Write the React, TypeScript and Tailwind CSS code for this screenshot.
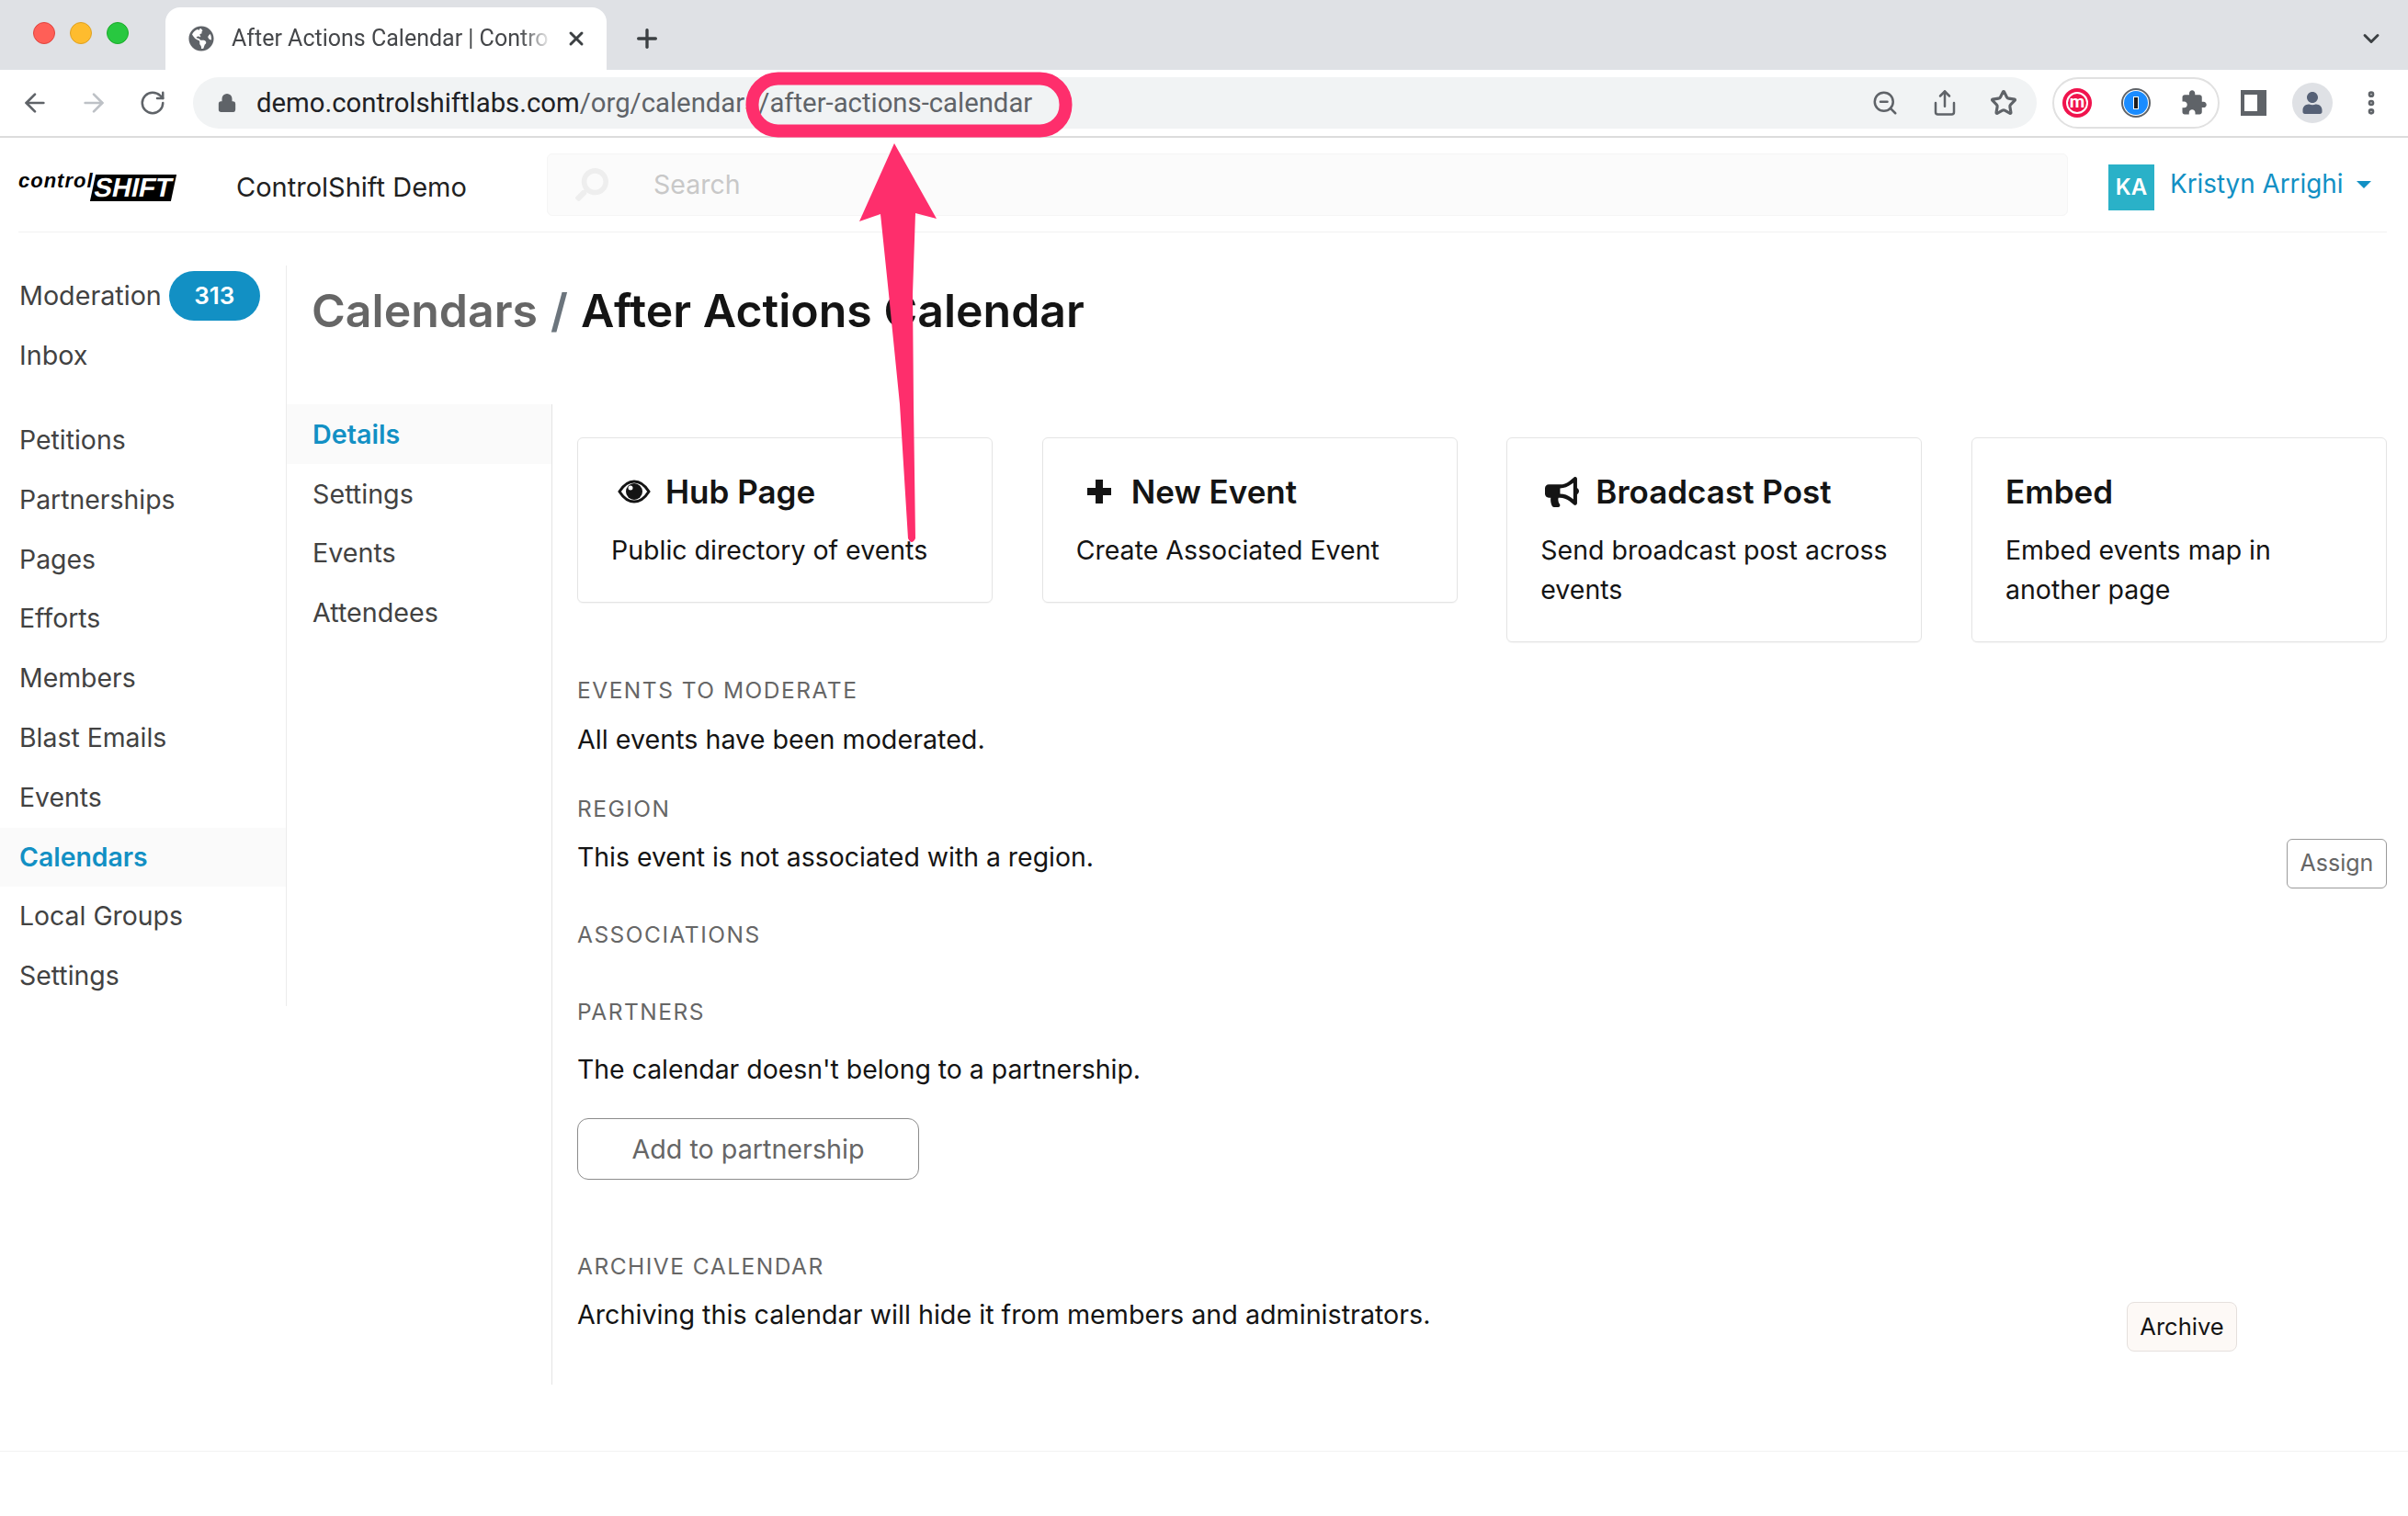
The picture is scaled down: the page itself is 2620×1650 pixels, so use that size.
import React from 'react';
import { ArrowLeft, ArrowRight, RotateCw, Lock, ZoomOut, Share, Star, X, Plus, ChevronDown, MoreVertical } from 'lucide-react';
import { FaBullhorn, FaUser, FaSearch, FaGlobeAmericas } from 'react-icons/fa';

const mainNav = ['Petitions', 'Partnerships', 'Pages', 'Efforts', 'Members', 'Blast Emails', 'Events', 'Calendars', 'Local Groups', 'Settings'];
const subNav = ['Details', 'Settings', 'Events', 'Attendees'];

function BrowserChrome() {
    return (
        <div className="font-['Roboto',sans-serif]">
            <div className="flex h-[76px] items-end bg-[#dfe1e5] pl-[36px] pr-[26px]">
                <div className="mb-[28px] flex gap-[16px] self-end">
                    <span className="h-[24px] w-[24px] rounded-full border border-[#e0443e] bg-[#ff5f57]" />
                    <span className="h-[24px] w-[24px] rounded-full border border-[#dea123] bg-[#febc2e]" />
                    <span className="h-[24px] w-[24px] rounded-full border border-[#1aab29] bg-[#28c840]" />
                </div>
                <div className="ml-[40px] flex h-[68px] w-[480px] items-center rounded-t-[16px] bg-white pl-[25px]">
                    <FaGlobeAmericas className="h-[28px] w-[28px] shrink-0 text-[#5f6368]" />
                    <span className="ml-[19px] w-[349px] whitespace-nowrap text-[25px] text-[#45474a] [mask-image:linear-gradient(to_right,black_90%,transparent)]">After Actions Calendar | Contro</span>
                    <X className="ml-[14px] h-[24px] w-[24px] text-[#3c4043]" strokeWidth={3} />
                </div>
                <Plus className="mb-[18px] ml-[28px] h-[32px] w-[32px] text-[#3c4043]" strokeWidth={2.5} />
                <ChevronDown className="mb-[20px] ml-auto h-[28px] w-[28px] text-[#3c4043]" strokeWidth={2.5} />
            </div>
            <div className="flex h-[74px] items-center border-b-2 border-[#dcdcdc] bg-white pl-[22px]">
                <ArrowLeft className="h-[32px] w-[32px] text-[#5f6368]" />
                <ArrowRight className="ml-[32px] h-[32px] w-[32px] text-[#bdc1c6]" />
                <RotateCw className="ml-[33px] h-[30px] w-[30px] text-[#5f6368]" />
                <div className="ml-[29px] flex h-[56px] w-[2006px] shrink-0 items-center rounded-full bg-[#f1f3f4] pl-[26px] pr-[21px]">
                    <Lock className="h-[22px] w-[22px] fill-[#5f6368] text-[#5f6368]" />
                    <span className="mt-[2px] ml-[21px] whitespace-nowrap text-[29.3px] text-[#202124]">
                        demo.controlshiftlabs.com<span className="text-[#5f6368]">/org/calendars/after-actions-calendar</span>
                    </span>
                    <ZoomOut className="ml-auto h-[30px] w-[30px] text-[#5f6368]" />
                    <Share className="ml-[35px] h-[30px] w-[30px] text-[#5f6368]" />
                    <Star className="ml-[34px] h-[30px] w-[30px] text-[#5f6368]" strokeWidth={2.5} />
                </div>
                <div className="ml-[17px] flex h-[56px] w-[182px] shrink-0 items-center justify-between rounded-full border-2 border-[#e1e1e1] pl-[9px] pr-[11px]">
                    <span className="flex h-[32px] w-[32px] items-center justify-center rounded-full bg-[#f0134d] p-[4px]">
                        <span className="flex h-full w-full items-center justify-center rounded-full border-2 border-white pb-[3px] text-[19px] leading-none font-bold text-white">m</span>
                    </span>
                    <span className="flex h-[32px] w-[32px] items-center justify-center rounded-full border-2 border-[#5f6368] bg-white p-[1px]">
                        <span className="flex h-full w-full items-center justify-center rounded-full bg-[#1a8cff]">
                            <span className="h-[14px] w-[6px] border border-white bg-[#1c1c1c]" />
                        </span>
                    </span>
                    <svg className="h-[30px] w-[30px] text-[#5f6368]" viewBox="0 0 24 24" fill="currentColor">
                        <path d="M20.5 11H19V7c0-1.1-.9-2-2-2h-4V3.5C13 2.12 11.88 1 10.5 1S8 2.12 8 3.5V5H4c-1.1 0-1.99.9-1.99 2v3.8H3.5c1.49 0 2.7 1.21 2.7 2.7s-1.21 2.7-2.7 2.7H2V20c0 1.1.9 2 2 2h3.8v-1.5c0-1.49 1.21-2.7 2.7-2.7 1.49 0 2.7 1.21 2.7 2.7V22H17c1.1 0 2-.9 2-2v-4h1.5c1.38 0 2.5-1.12 2.5-2.5S21.88 11 20.5 11z" />
                    </svg>
                </div>
                <div className="ml-[23px] h-[28px] w-[28px] shrink-0 border-y-[5px] border-r-[10px] border-l-[4px] border-[#5f6368] bg-white" />
                <div className="ml-[28px] flex h-[44px] w-[44px] shrink-0 items-center justify-center rounded-full bg-[#dfe1e5]">
                    <FaUser className="h-[24px] w-[24px] text-[#566176]" />
                </div>
                <MoreVertical className="ml-[26px] h-[32px] w-[32px] shrink-0 text-[#5f6368]" strokeWidth={3} />
            </div>
        </div>
    );
}

function Logo() {
    return (
        <div className="flex w-[170px] items-start font-['Liberation_Sans',sans-serif]">
            <span className="mt-[1px] w-[81px] shrink-0 text-[22px] leading-[24px] font-bold tracking-[1px] text-black italic">control</span>
            <span className="mt-[6px] flex h-[29px] w-[88px] shrink-0 -skew-x-12 items-center justify-center bg-black text-[29px] leading-[29px] font-bold text-white">SHIFT</span>
        </div>
    );
}

function TopBar() {
    return (
        <div className="mr-[23px] ml-[20px] flex h-[103px] items-center border-b border-[#f2f2f2]">
            <Logo />
            <span className="mt-[6px] ml-[67px] w-[338px] shrink-0 whitespace-nowrap text-[29px] text-[#212121]">ControlShift Demo</span>
            <div className="flex h-[68px] w-[1655px] shrink-0 items-center rounded-[6px] border border-[#f5f5f5] bg-[#fbfbfb] pl-[30px]">
                <FaSearch className="h-[36px] w-[36px] -scale-x-100 text-[#eeeeee]" />
                <span className="mt-[1px] ml-[49px] text-[28.5px] text-[#c8c8c8]">Search</span>
            </div>
            <div className="mt-[6px] ml-[44px] flex h-[50px] w-[50px] shrink-0 items-center justify-center bg-[#2ab1c8] text-[24px] font-semibold text-white">KA</div>
            <span className="ml-[17px] shrink-0 whitespace-nowrap text-[27.8px] text-[#1290c4]">Kristyn Arrighi</span>
            <span className="ml-[15px] h-0 w-0 border-x-[8px] border-t-[8px] border-x-transparent border-t-[#1290c4]" />
        </div>
    );
}

function Sidebar() {
    return (
        <div className="mt-[36px] h-[806px] w-[312px] shrink-0 self-start border-r border-[#ececec]">
            <div className="flex h-[65px] items-center pl-[21px] text-[#424242]">
                Moderation
                <span className="ml-[8px] flex h-[54px] w-[99px] items-center justify-center rounded-full bg-[#1290c4] text-[26px] font-semibold text-white">313</span>
            </div>
            <div className="flex h-[65px] items-center pl-[21px] text-[#424242]">Inbox</div>
            <div className="mt-[28px] flex flex-col text-[28.4px]">
                {mainNav.map((item) => (
                    <div
                        key={item}
                        className={item === 'Calendars' ? 'flex h-[64.8px] items-center bg-[#fafafa] pl-[21px] font-semibold text-[#1290c4]' : 'flex h-[64.8px] items-center pl-[21px] text-[#424242]'}
                    >
                        {item}
                    </div>
                ))}
            </div>
        </div>
    );
}

function EyeIcon() {
    return (
        <svg className="mr-[16px] ml-[7px] h-[36px] w-[36px] text-[#141414]" viewBox="0 0 36 36" fill="none">
            <path d="M2 18C7 10 12 7 18 7s11 3 16 11c-5 8-10 11-16 11S7 26 2 18z" stroke="currentColor" strokeWidth="3" />
            <circle cx="18" cy="18" r="9" fill="currentColor" />
            <circle cx="14" cy="14" r="2.5" fill="white" />
        </svg>
    );
}

function PlusIcon() {
    return (
        <svg className="mr-[21px] ml-[11px] h-[28px] w-[28px] text-[#141414]" viewBox="0 0 28 28" fill="currentColor">
            <path d="M10 1h8v9h9v8h-9v9h-8v-9H1v-8h9z" />
        </svg>
    );
}

function ActionCard({ icon, title, children }: { icon?: React.ReactNode; title: string; children: React.ReactNode }) {
    return (
        <div className="w-[452px] self-start rounded-[6px] border border-[#e4e4e4] px-[36px] pt-[30px] pb-[35px] shadow-[0_1px_1px_rgba(0,0,0,0.04)]">
            <div className="flex h-[56px] items-center text-[35px] font-semibold text-[#141414]">
                {icon}
                {title}
            </div>
            <div className="mt-[14px] text-[28.5px] leading-[43px] text-[#141414]">{children}</div>
        </div>
    );
}

function SectionLabel({ children, className }: { children: React.ReactNode; className: string }) {
    return <div className={`text-[24.5px] uppercase tracking-[1.5px] text-[#666666] ${className}`}>{children}</div>;
}

export default function App() {
    return (
        <div className="relative min-h-[1650px] bg-white font-['Inter',sans-serif] text-[28.7px]">
            <BrowserChrome />
            <TopBar />
            <div className="flex">
                <Sidebar />
                <div className="min-w-0 flex-1">
                    <h1 className="flex h-[187px] items-start pt-[53px] pl-[27px] text-[50px] leading-[64px] font-semibold text-[#141414]">
                        <span className="text-[#666666]">Calendars</span>
                        <span className="ml-[14px] text-[#6c757d]">/</span>
                        <span className="ml-[14px]">After Actions Calendar</span>
                    </h1>
                    <div className="flex">
                        <div className="h-[1067px] w-[289px] shrink-0 border-r border-[#e4e4e4]">
                            {subNav.map((item, i) => (
                                <div
                                    key={item}
                                    className={i === 0 ? 'flex h-[64.8px] items-center bg-[#fafafa] pl-[28px] font-semibold text-[#1290c4]' : 'flex h-[64.8px] items-center pl-[28px] text-[#424242]'}
                                >
                                    {item}
                                </div>
                            ))}
                        </div>
                        <div className="flex-1 pt-[36px] pr-[23px] pl-[27px] text-[#141414]">
                            <div className="flex justify-between">
                                <ActionCard title="Hub Page" icon={<EyeIcon />}>
                                    Public directory of events
                                </ActionCard>
                                <ActionCard title="New Event" icon={<PlusIcon />}>
                                    Create Associated Event
                                </ActionCard>
                                <ActionCard title="Broadcast Post" icon={<FaBullhorn className="mr-[18px] ml-[5px] h-[37px] w-[37px]" />}>
                                    Send broadcast post across events
                                </ActionCard>
                                <ActionCard title="Embed">Embed events map in another page</ActionCard>
                            </div>
                            <SectionLabel className="mt-[34px]">Events to moderate</SectionLabel>
                            <div className="mt-[13px]">All events have been moderated.</div>
                            <SectionLabel className="mt-[36px]">Region</SectionLabel>
                            <div className="flex items-start justify-between">
                                <div className="mt-[13px] text-[28.4px]">This event is not associated with a region.</div>
                                <button className="mt-[14px] h-[54px] w-[109px] rounded-[6px] border border-[#9a9a9a] text-[25px] text-[#666666]">Assign</button>
                            </div>
                            <SectionLabel className="mt-[32px]">Associations</SectionLabel>
                            <SectionLabel className="mt-[48px]">Partners</SectionLabel>
                            <div className="mt-[23px] text-[28.4px]">The calendar doesn't belong to a partnership.</div>
                            <button className="mt-[31px] h-[67px] w-[372px] rounded-[12px] border border-[#8c8c8c] text-[#666666]">Add to partnership</button>
                            <SectionLabel className="mt-[76px]">Archive calendar</SectionLabel>
                            <div className="flex items-start justify-between pr-[163px]">
                                <div className="mt-[13px]">Archiving this calendar will hide it from members and administrators.</div>
                                <button className="mt-[21px] h-[54px] w-[120px] rounded-[8px] border border-[#e5e0dd] bg-[#fdf9f6] text-[25.5px] text-[#141414]">Archive</button>
                            </div>
                        </div>
                    </div>
                </div>
            </div>
            <div className="mt-[72px] border-t border-[#f2f2f2]" />
            {/* annotation drawn over the screenshot */}
            <svg className="absolute top-0 left-0 h-[620px] w-[1200px]" viewBox="0 0 1200 620" fill="none">
                <rect x="818.5" y="85.5" width="341" height="57" rx="28" stroke="#fe2e6c" strokeWidth="14" />
                <path d="M973 156 L1019 238 L996 232 L993 320 L994 440 L996 586 Q992 594 988 586 L979 440 L967 320 L958 233 L935 241 Z" fill="#fe2e6c" />
            </svg>
        </div>
    );
}
